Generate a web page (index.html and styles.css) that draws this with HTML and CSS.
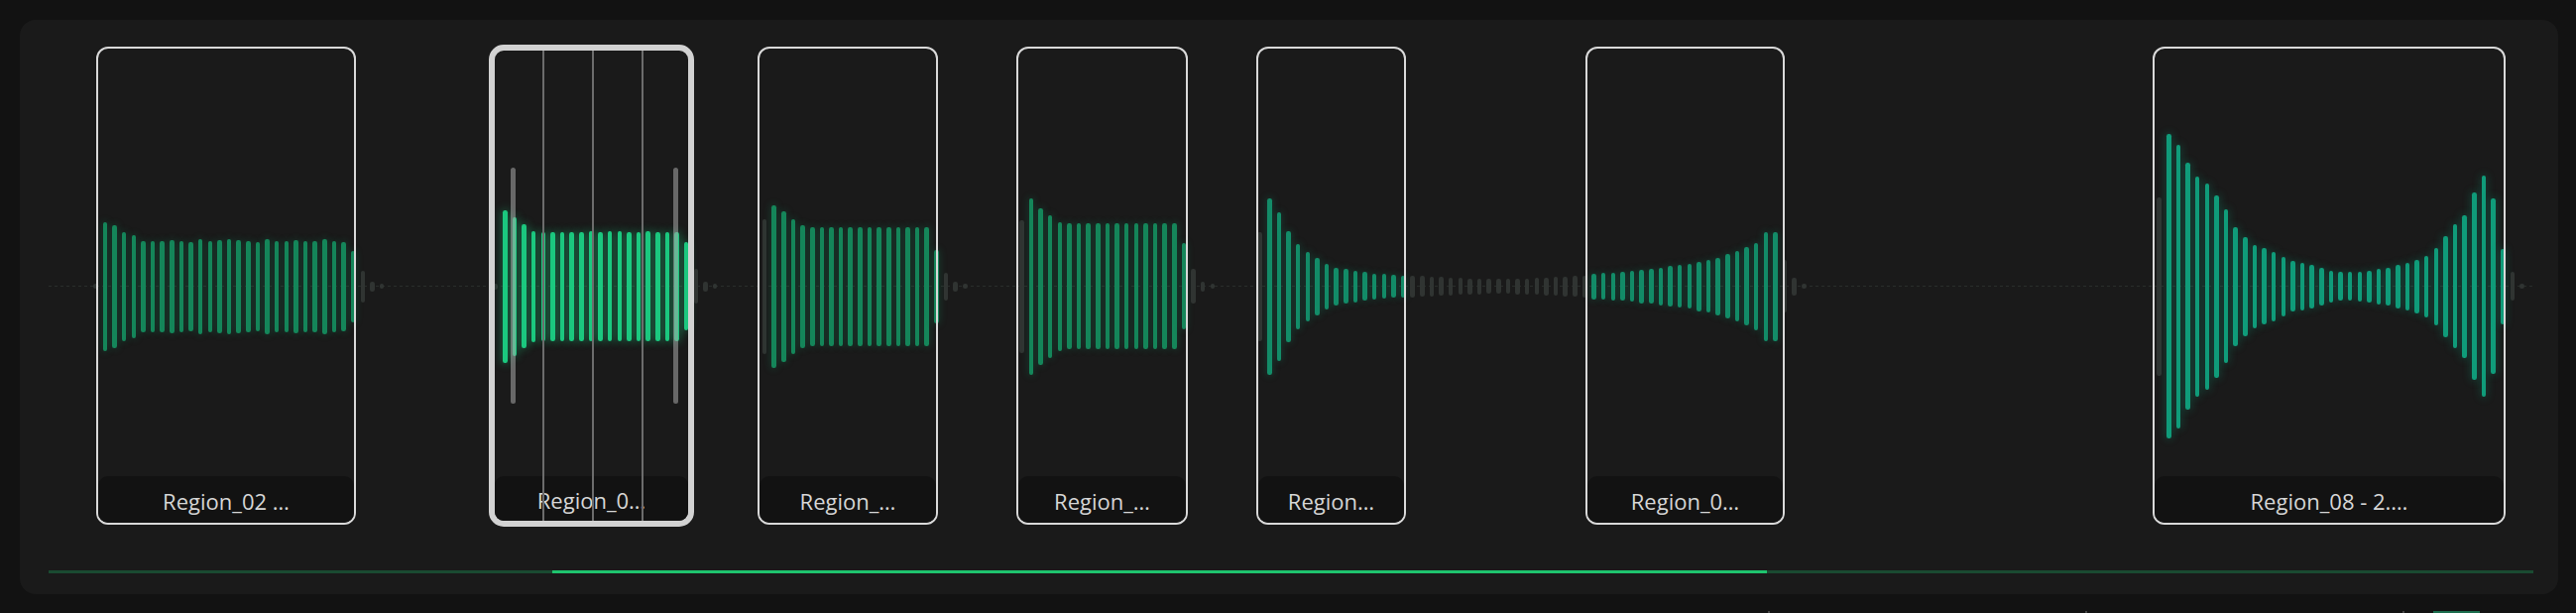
FILE: index.html
```html
<!DOCTYPE html>
<html lang="en">
<head>
<meta charset="utf-8">
<title>Regions</title>
<link rel="stylesheet" href="styles.css">
</head>
<body>
<div class="panel">
  <div class="track" id="track">
    <div class="centerline"></div>
    <div id="wave"></div>
    <div class="region r1"><div class="label">Region_02 …</div></div>
    <div class="region sel r2">
      <span class="grid g1"></span><span class="grid g2"></span><span class="grid g3"></span>
      <span class="handle hl"></span><span class="handle hr"></span>
      <div class="label">Region_0…</div>
    </div>
    <div class="region r3"><div class="label">Region_…</div></div>
    <div class="region r4"><div class="label">Region_…</div></div>
    <div class="region r5"><div class="label">Region…</div></div>
    <div class="region r6"><div class="label">Region_0…</div></div>
    <div class="region r7"><div class="label">Region_08 - 2.…</div></div>
  </div>
  <div class="progress"><div class="progress-fill"></div></div>
</div>
<div class="footer">
  <span class="tick"></span><span class="tick"></span><span class="tick"></span><span class="chip"></span>
</div>
<script src="script.js"></script>
</body>
</html>
```

FILE: styles.css
```css
* { box-sizing: border-box; }
html, body { margin: 0; padding: 0; }
body {
  background: #121212;
  width: 2598px;
  height: 618px;
  overflow: hidden;
  font-family: "Open Sans", "Noto Sans", "DejaVu Sans", sans-serif;
  padding-top: 20px;
}
.panel {
  margin-left: 20px;
  width: 2560px;
  height: 579px;
  background: #1a1a1a;
  border-radius: 16px;
  padding: 25px 0 0 29px;
  display: flex;
  flex-direction: column;
}
.track {
  position: relative;
  width: 2506px;
  height: 487px;
}
.centerline {
  position: absolute;
  left: 0;
  right: 0;
  top: 243px;
  height: 1px;
  background: repeating-linear-gradient(90deg, #2a2e2b 0 3px, transparent 3px 6px);
}
.seg {
  position: absolute;
  top: 0;
  height: 487px;
  display: flex;
  align-items: center;
  gap: 5.04px;
}
.bar {
  width: 4.6px;
  border-radius: 2.3px;
  flex: none;
}
.bar.off { background: #303432; }
.bar.c1 { background: #15865a; box-shadow: 0 0 7px 1px rgba(21, 134, 90, 0.28); }
.bar.c2 { background: #138c68; box-shadow: 0 0 7px 1px rgba(19, 140, 104, 0.28); }
.bar.c3 { background: #109c7a; box-shadow: 0 0 8px 1px rgba(16, 156, 122, 0.32); }
.bar.sel { background: #1cc87f; box-shadow: 0 0 8px 1px rgba(28, 200, 127, 0.42); }

.region {
  position: absolute;
  top: 2px;
  height: 482px;
  border: 2px solid #d9d9d9;
  border-radius: 12px;
  display: flex;
  flex-direction: column;
  justify-content: flex-end;
  z-index: 3;
}
.region.sel {
  top: 0;
  height: 486px;
  border: 6px solid #d2d2d2;
  border-radius: 15px;
}
.r1 { left: 48px; width: 262px; }
.r2 { left: 444px; width: 207px; }
.r3 { left: 715px; width: 182px; }
.r4 { left: 976px; width: 173px; }
.r5 { left: 1218px; width: 151px; }
.r6 { left: 1550px; width: 201px; }
.r7 { left: 2122px; width: 356px; }

.label {
  height: 47px;
  background: #121212;
  border-radius: 10px;
  display: flex;
  align-items: center;
  justify-content: center;
  color: #d6d6d6;
  font-size: 22px;
  line-height: 47px;
  white-space: nowrap;
  overflow: hidden;
  padding-top: 3px;
}
.region.sel .label { height: 45px; border-radius: 9px; }

.grid {
  position: absolute;
  top: 0;
  bottom: 0;
  width: 2px;
  background: #6c6c6c;
  z-index: 2;
}
.g1 { left: 48px; }
.g2 { left: 98px; }
.g3 { left: 148px; }
.handle {
  position: absolute;
  top: 118px;
  height: 238px;
  width: 5px;
  border-radius: 3px;
  background: rgba(170, 170, 170, 0.55);
  z-index: 2;
}
.hl { left: 16px; }
.hr { left: 180px; }

.progress {
  margin-top: 43px;
  width: 2506px;
  height: 3px;
  background: #1a4a31;
  display: flex;
}
.progress-fill {
  margin-left: 508px;
  width: 1225px;
  background: #1fc46e;
}

.footer {
  margin-top: 17px;
  display: flex;
  align-items: flex-start;
  padding-left: 1783px;
  height: 2px;
}
.tick { width: 2px; height: 2px; background: #444; flex: none; }
.tick + .tick { margin-left: 318px; }
.chip { margin-left: 29px; width: 47px; height: 2px; background: #1b6d4d; flex: none; }
```

FILE: script.js
```js
(function () {
  var ORIGIN = 49;
  var segments = [
    { x: 94, runs: [
      ['off', [2.5]],
      ['c1', [65,62,55,52,46,46,46,47,46,45,48,46,47,48,47,46,45,48,46,46,47,46,46,48,46,45,36]],
      ['off', [16,5,2.5]]
    ]},
    { x: 497.4, runs: [
      ['off', [3]],
      ['sel', [77,70,62.6,56,55,55,55,55,55,55.5,55,55.5,55.5,55,55,55.5,55,55,55,44.7]],
      ['off', [17.5,5,2.5]]
    ]},
    { x: 768.8, runs: [
      ['off', [68]],
      ['c1', [82,76,68,62,60,60,60,60,60,60,60,60,60,60,60,60,60,37]],
      ['off', [14,5,2.5]]
    ]},
    { x: 1028, runs: [
      ['off', [67]],
      ['c1', [89,79,72,65,63.5,63.5,63.5,63.5,63.5,63.5,63.5,63.5,63.5,63.5,63.5,63.5,43.5]],
      ['off', [17.5,5,2.5]]
    ]},
    { x: 1268.4, runs: [
      ['off', [55]],
      ['c2', [89,75,56,43,35,29,23,19,17.5,16,14.5,13,12.5,11.5,11]],
      ['off', [11,10.5,10,9.5,9,8.5,8,8,7.5,7.5,7.5,8,8,8.5,9,9.5,10,10.5,11]],
      ['c2', [13,13.5,14,14.5,15.5,17,17.5,19,20.5,21.5,22.5,25,26.5,29,32.5,35.5,39.4,44,55,55]],
      ['off', [26.6,9,2.5]]
    ]},
    { x: 2175.4, runs: [
      ['off', [90]],
      ['c3', [153.7,143,124.8,111,104,92,77.5,60,50,42,38.6,35,30,25.6,24,22,19,16,14.4,14.4,15,16,18,19,22,24,27,31,39,51,62.7,72,94.6,111.7,88.7,38]],
      ['off', [14.7,2.5]]
    ]}
  ];
  var wave = document.getElementById('wave');
  segments.forEach(function (s) {
    var seg = document.createElement('div');
    seg.className = 'seg';
    seg.style.left = (s.x - ORIGIN) + 'px';
    s.runs.forEach(function (run) {
      run[1].forEach(function (h) {
        var b = document.createElement('span');
        b.className = 'bar ' + run[0];
        b.style.height = (h * 2) + 'px';
        seg.appendChild(b);
      });
    });
    wave.appendChild(seg);
  });
})();
```
